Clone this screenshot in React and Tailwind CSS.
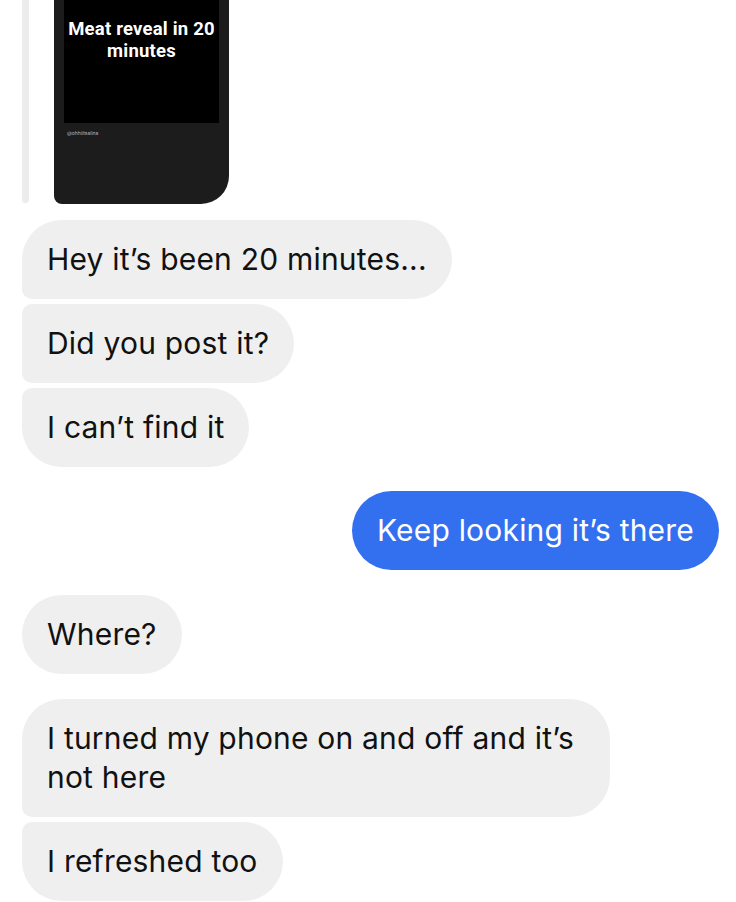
import React from "react";

const theirs = [
  { id: 1, text: "Hey it’s been 20 minutes...", corner: "rounded-tl-[40px] rounded-bl-[10px]" },
  { id: 2, text: "Did you post it?", corner: "rounded-tl-[10px] rounded-bl-[10px]" },
  { id: 3, text: "I can’t find it", corner: "rounded-tl-[10px] rounded-bl-[40px]" },
];

function Bubble({ children, className = "" }) {
  return (
    <div
      className={`self-start bg-[#efefef] text-[#111] rounded-r-[40px] px-[25px] py-[20px] text-[30px] leading-[39px] tracking-[0.2px] ${className}`}
    >
      {children}
    </div>
  );
}

export default function App() {
  return (
    <div
      className="w-[736px] h-[902px] bg-white overflow-hidden flex flex-col pl-[22px] pr-[17px]"
      style={{ fontFamily: "Inter, 'Liberation Sans', sans-serif" }}
    >
      {/* shared story */}
      <div className="flex items-start h-[204px] shrink-0">
        <div className="w-[7px] h-[203px] bg-[#ececec] rounded-b-sm"></div>
        <div className="ml-[25px] w-[175px] h-[204px] bg-[#1c1c1c] rounded-bl-[8px] rounded-br-[28px] flex flex-col items-center">
          <div className="w-[155px] h-[123px] bg-black flex flex-col items-center pt-[18px]">
            <p
              className="text-white font-bold text-[18.5px] leading-[22px] tracking-[0.2px] text-center"
              style={{ fontFamily: "Roboto, 'Liberation Sans', sans-serif" }}
            >
              Meat reveal in 20
              <br />
              minutes
            </p>
          </div>
          <div className="w-[155px] pl-[3px] pt-[8px] text-[5px] leading-none">
            <span className="text-[#bbb]">@ohhiitsalina</span>
          </div>
        </div>
      </div>

      <div className="flex flex-col gap-[5px] mt-[16px]">
        {theirs.map((m) => (
          <Bubble key={m.id} className={m.corner}>
            {m.text}
          </Bubble>
        ))}
      </div>

      <div className="self-end mt-[24px] bg-[#3370f0] text-white rounded-[40px] px-[25px] py-[20px] text-[30px] leading-[39px] tracking-[0.2px]">
        Keep looking it’s there
      </div>

      <Bubble className="mt-[25px] rounded-l-[40px]">Where?</Bubble>

      <div className="flex flex-col gap-[5px] mt-[25px]">
        <Bubble className="rounded-tl-[40px] rounded-bl-[10px] w-[588px]">
          I turned my phone on and off and it’s not here
        </Bubble>
        <Bubble className="rounded-tl-[10px] rounded-bl-[40px]">I refreshed too</Bubble>
      </div>
    </div>
  );
}
